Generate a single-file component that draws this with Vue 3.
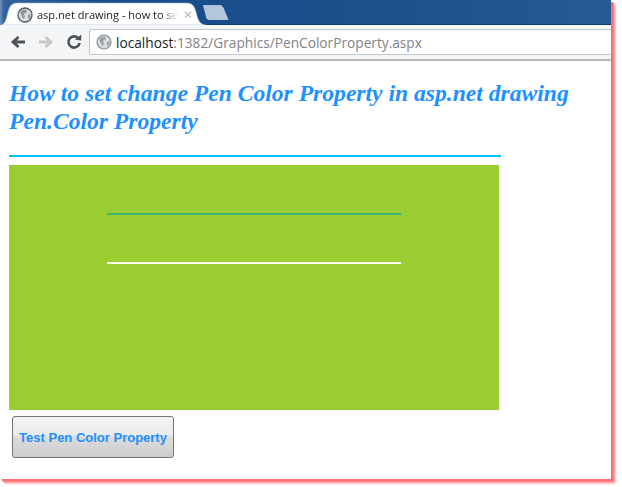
<template>
  <div class="stage">
    <div class="window">
      <div class="tabbar">
        <div class="tab">
          <svg class="tab-shape" width="206" height="24" viewBox="0 0 206 24">
            <path d="M0 24 C5 24 6 19 8 11 C10 4 12 2 18 2 L186 2 C192 2 194 4 196 11 C198 19 200 24 206 24 Z" fill="#fff" stroke="#9db4cc" stroke-width="0.6" />
          </svg>
          <svg class="globe" width="16" height="16" viewBox="0 0 16 16">
            <circle cx="8" cy="8" r="7" fill="#d9dde0" stroke="#55595e" stroke-width="1.3" />
            <path d="M5 3 L9 2.5 L10 5 L7 7 L8 10 L6 12 L4.5 8 L3 6 Z" fill="#8c959c" />
            <path d="M11 8 L13.5 7 L13 11 L11 12 Z" fill="#8c959c" />
          </svg>
          <span class="tab-title">asp.net drawing - how to se</span>
          <span class="tab-close">×</span>
        </div>
        <svg class="newtab" width="26" height="15" viewBox="0 0 26 15">
          <path d="M0.5 0.5 L17 0.5 C19 0.5 20 2 21 5 L25 14.5 L6 14.5 C4 14.5 3.5 13 3 10 Z" fill="#b4c6dc" stroke="#dfe7f0" stroke-width="0.6" />
        </svg>
      </div>
      <div class="toolbar">
        <svg class="nav" width="16" height="16" viewBox="0 0 16 16">
          <path d="M15 8 H4 M8.5 3 L3 8 L8.5 13" fill="none" stroke="#4e5256" stroke-width="2.8" />
        </svg>
        <svg class="nav" width="16" height="16" viewBox="0 0 16 16">
          <path d="M1 8 H12 M7.5 3 L13 8 L7.5 13" fill="none" stroke="#c6c8ca" stroke-width="2.8" />
        </svg>
        <svg class="nav" width="16" height="16" viewBox="0 0 16 16">
          <path d="M12.6 4.6 A5.6 5.6 0 1 0 13.6 9" fill="none" stroke="#4e5256" stroke-width="2.6" />
          <path d="M9 5.8 L15.2 6.6 L15.2 0.6 Z" fill="#4e5256" />
        </svg>
        <div class="omnibox">
          <svg class="globe" width="16" height="16" viewBox="0 0 16 16">
            <circle cx="8" cy="8" r="7" fill="#d9dde0" stroke="#85898e" stroke-width="1.2" />
            <path d="M5 3 L9 2.5 L10 5 L7 7 L8 10 L6 12 L4.5 8 L3 6 Z" fill="#9aa2a8" />
            <path d="M11 8 L13.5 7 L13 11 L11 12 Z" fill="#9aa2a8" />
          </svg>
          <span class="host">localhost</span><span class="path">:1382/Graphics/PenColorProperty.aspx</span>
        </div>
      </div>
      <div class="page">
        <h2 class="heading">How to set change Pen Color Property in asp.net drawing<br />Pen.Color Property</h2>
        <hr class="rule" />
        <div class="canvas">
          <div class="pen pen-green"></div>
          <div class="pen pen-white"></div>
        </div>
        <button class="test-button">Test Pen Color Property</button>
      </div>
    </div>
  </div>
</template>

<script setup>
</script>

<style>
html, body {
  margin: 0;
  background: #fff;
}
</style>

<style scoped>
.stage {
  width: 622px;
  height: 487px;
  overflow: hidden;
  background: #fff;
}
.window {
  width: 611px;
  height: 479px;
  overflow: hidden;
  background: #fff;
  box-shadow: 2px 2px 0 #fb7073, 3px 3px 1px #fb8588, 4px 4px 2px #fca5a7, 5px 5px 2px #fed4d5;
  font-family: "Open Sans", "Liberation Sans", sans-serif;
}
.tabbar {
  height: 25px;
  display: flex;
  align-items: flex-end;
  background: linear-gradient(90deg, #7490bb 0, #33619b 4px, #174b8a 120px, #1d518d 400px, #285a93 100%);
  border-bottom: 1px solid #0e3a70;
  box-sizing: border-box;
}
.tab {
  position: relative;
  flex: none;
  width: 206px;
  height: 24px;
  margin-bottom: -1px;
  display: flex;
  align-items: center;
  padding: 3px 0 0 17px;
  box-sizing: border-box;
}
.tab-shape {
  position: absolute;
  left: 0;
  top: 0;
}
.tab .globe {
  position: relative;
  flex: none;
}
.tab-title {
  position: relative;
  margin-left: 4px;
  white-space: nowrap;
  font-size: 11px;
  color: #222;
  -webkit-mask-image: linear-gradient(90deg, #000 88%, transparent 100%);
  mask-image: linear-gradient(90deg, #000 88%, transparent 100%);
}
.tab-close {
  position: relative;
  margin-left: 6px;
  font-size: 15px;
  line-height: 1;
  color: #b0b4b8;
}
.newtab {
  margin: 0 0 4px -3px;
}
.toolbar {
  height: 36px;
  display: flex;
  align-items: center;
  padding-left: 10px;
  box-sizing: border-box;
  background: #f4f5f6;
  border-bottom: 2px solid #b6b8ba;
}
.nav {
  flex: none;
  margin-right: 12px;
}
.nav:last-of-type {
  margin-right: 0;
}
.omnibox {
  flex: 1;
  height: 26px;
  margin-left: 7px;
  display: flex;
  align-items: center;
  padding-left: 6px;
  box-sizing: border-box;
  background: #fff;
  border: 1px solid #c4c6c8;
  border-right: 0;
  border-radius: 3px 0 0 3px;
  font-size: 13.7px;
  white-space: nowrap;
}
.omnibox .globe {
  margin-right: 4px;
}
.host {
  color: #222;
}
.path {
  color: #808487;
}
.page {
  padding: 18px 0 0 9px;
}
.heading {
  margin: 0;
  width: 590px;
  font-family: "Liberation Serif", serif;
  font-style: italic;
  font-weight: bold;
  font-size: 23.6px;
  line-height: 28px;
  color: #1e90ff;
}
.rule {
  width: 492px;
  height: 2px;
  margin: 20px 0 8px;
  border: 0;
  background: #00bfff;
}
.canvas {
  width: 490px;
  height: 245px;
  padding: 48px 0 0 98px;
  box-sizing: border-box;
  background: #9acd32;
}
.pen {
  width: 294px;
  height: 2px;
}
.pen-green {
  background: #3cb371;
}
.pen-white {
  margin-top: 47px;
  background: #fffff0;
}
.test-button {
  display: block;
  width: 162px;
  height: 42px;
  margin: 6px 0 0 3px;
  padding: 0;
  border: 1px solid #757575;
  border-radius: 3px;
  background: linear-gradient(#f3f3f3, #ebebeb 45%, #dcdcdc 50%, #cdcdcd);
  font-family: "Liberation Sans", sans-serif;
  font-weight: bold;
  font-size: 13px;
  color: #1e90ff;
}
</style>
